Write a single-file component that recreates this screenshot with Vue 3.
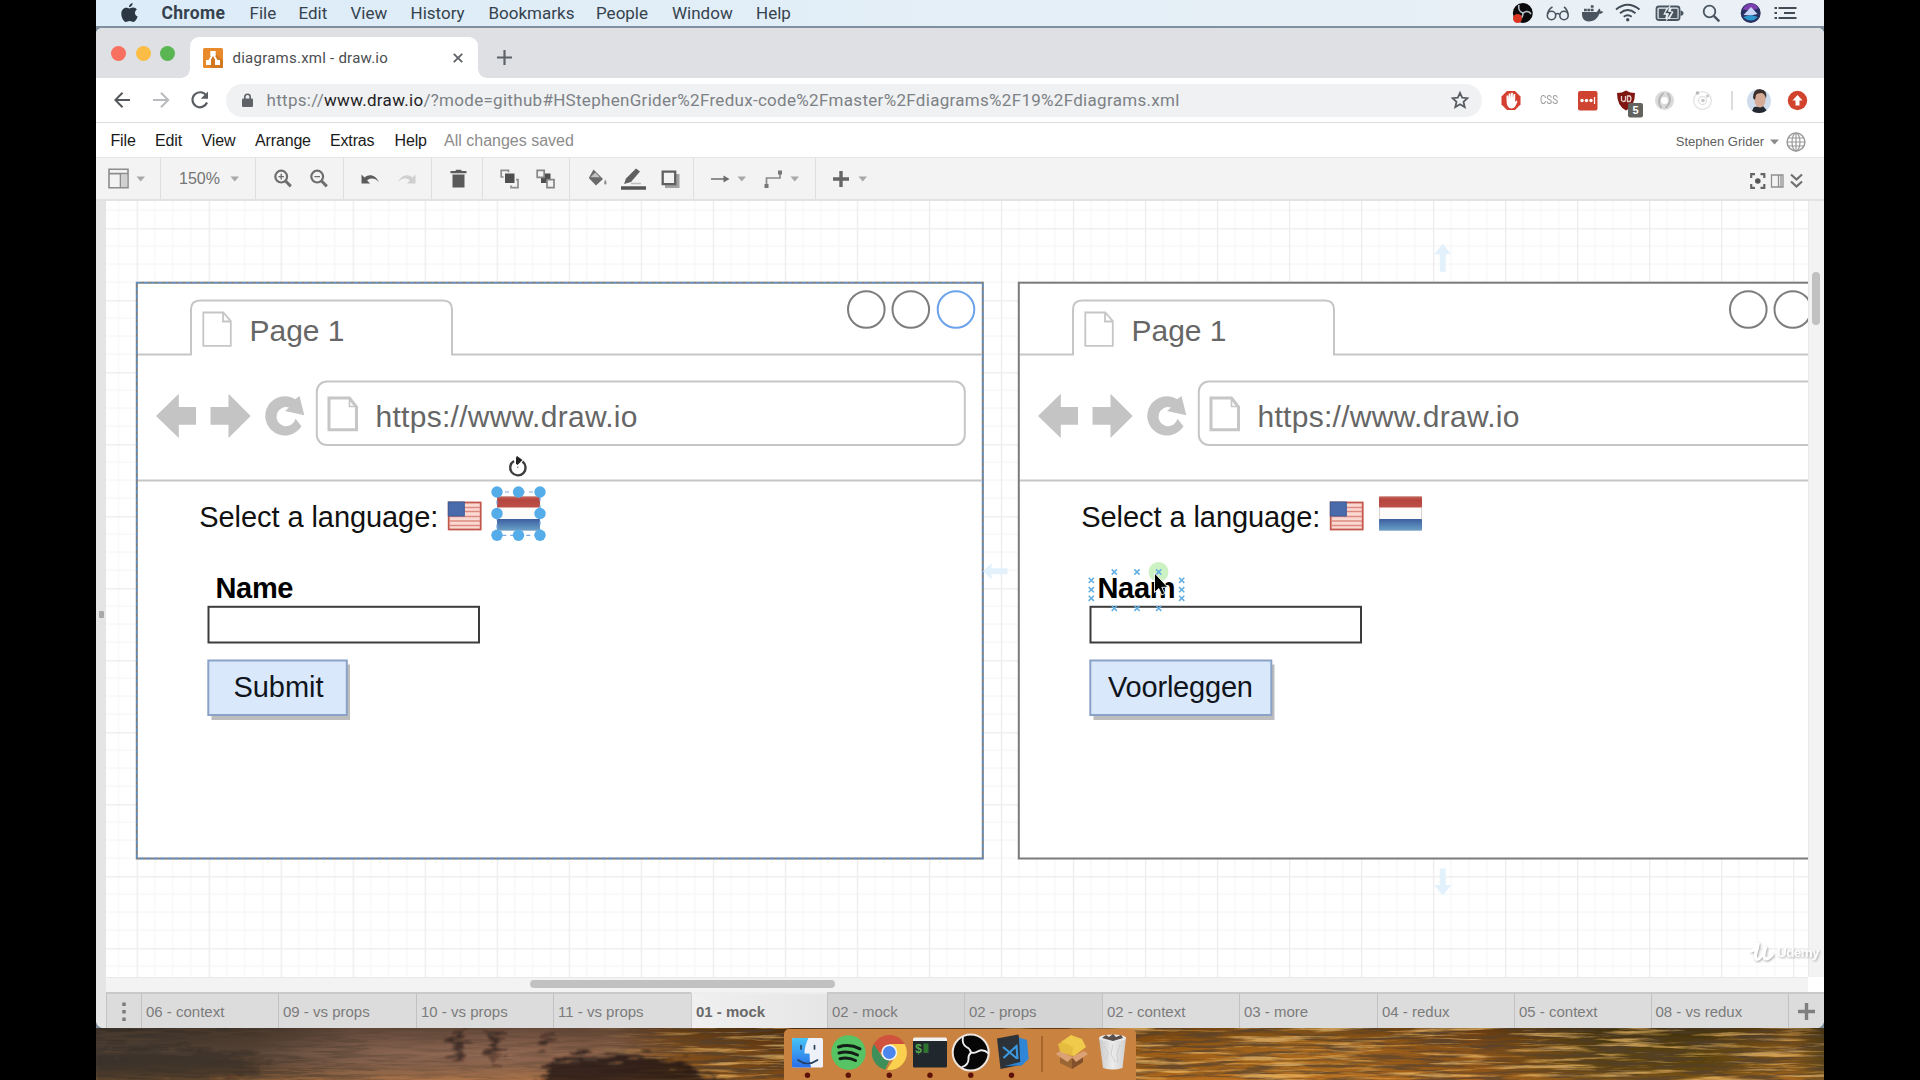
<script setup>
const macMenu = [
  { label: 'File', w: 49 }, { label: 'Edit', w: 52 }, { label: 'View', w: 60 },
  { label: 'History', w: 78 }, { label: 'Bookmarks', w: 107.5 }, { label: 'People', w: 76 },
  { label: 'Window', w: 84 }, { label: 'Help', w: 50 },
]
const appMenu = [
  { label: 'File', w: 44.5 }, { label: 'Edit', w: 46.5 }, { label: 'View', w: 53.5 },
  { label: 'Arrange', w: 75 }, { label: 'Extras', w: 64.5 }, { label: 'Help', w: 49.5 },
]
const caret = '<path d="M0.5 9.5h8.5l-4.25 5z" fill="#a8a8a8"/>'
const toolGroups = [
  { w: 65, items: [
    { w: 21, gap: 12, art: '<g fill="none" stroke="#8c8c8c" stroke-width="1.6"><path d="M1 2.2h19v18.6H1zM1 6.6h19M12.5 6.6v14"/></g><path d="M13.4 7.4h5.8V20h-5.8z" fill="#d0d0d0"/>' },
    { w: 9, gap: 7, art: caret }] },
  { w: 95, items: [{ text: '150%', w: 40, gap: 18 }, { w: 9, gap: 11, art: caret }] },
  { w: 88, items: [
    { w: 18, gap: 18, art: '<circle cx="7.2" cy="9.6" r="5.9" fill="none" stroke="#6e6e6e" stroke-width="2.2"/><path d="M11.6 14l5.2 5.4" stroke="#6e6e6e" stroke-width="3"/><path d="M4.4 9.6h5.6M7.2 6.8v5.6" stroke="#6e6e6e" stroke-width="1.4"/>' },
    { w: 18, gap: 17.5, art: '<circle cx="7.2" cy="9.6" r="5.9" fill="none" stroke="#6e6e6e" stroke-width="2.2"/><path d="M11.6 14l5.2 5.4" stroke="#6e6e6e" stroke-width="3"/><path d="M4.4 9.6h5.6" stroke="#6e6e6e" stroke-width="1.4"/>' }] },
  { w: 88, items: [
    { w: 19, gap: 17, art: '<path d="M0.5 7.5v9h8.6l-3-3c3.400-3 8-2.500 11.800 1.500C15 8.500 8.500 6 3.500 10.500z" fill="#5c5c5c"/>' },
    { w: 19, gap: 17, art: '<path d="M18.500 7.500v9H9.900l3-3C9.500 10.500 4.900 11 1.100 15 4 8.500 10.500 6 15.500 10.500z" fill="#cfcfcf"/>' }] },
  { w: 51, items: [
    { w: 17, gap: 17.5, art: '<path d="M0.500 4h4.800l1-1.300h4.600l1 1.300h4.600v2.300H.500zM2.500 7.500h12v13h-12z" fill="#5a5a5a"/>' }] },
  { w: 87, items: [
    { w: 19, gap: 17, art: '<path d="M5 6.500h9.500V16H5z" fill="#4f4f4f"/><path d="M3.600 10H1.200V3.300h7.300v2M11 18.400v2.200h7v-8h-2" fill="none" stroke="#8e8e8e" stroke-width="1.700"/>' },
    { w: 19, gap: 17, art: '<path d="M5 6.500h9.500V16H5z" fill="#4f4f4f"/><path d="M1.200 3.300h7v7h-7zM11 12.600h7v8h-7z" fill="#f3f3f3" stroke="#858585" stroke-width="1.700"/>' }] },
  { w: 124, items: [
    { w: 20, gap: 17.5, art: '<path d="M5.500 2.500l9.500 9.500-7 6.500L.800 11z" fill="#6a6a6a"/><path d="M2.500 10.200l4.800-4.600 4.600 4.600z" fill="#c4c4c4"/><path d="M17.300 12.500c1.500 2.500 1.800 5 .100 5s-1.600-2.500-.100-5z" fill="#8f8f8f"/>' },
    { w: 25, gap: 13, art: '<path d="M0 19.300h25v3.400H0z" fill="#555"/><path d="M3 17l2-5.500L15 1.500l4 3L10 15z" fill="#5f5f5f"/><path d="M10 16.500h10" stroke="#bdbdbd" stroke-width="1.500"/>' },
    { w: 19, gap: 15.5, art: '<path d="M4 7h14.500v14H4z" fill="#a2a2a2"/><path d="M1.700 4.700h12.500v12.500H1.700z" fill="#f3f3f3" stroke="#606060" stroke-width="2.300"/>' }] },
  { w: 122, items: [
    { w: 19, gap: 17, art: '<path d="M0 12h14" stroke="#6c6c6c" stroke-width="1.700"/><path d="M12.500 8.500L18.500 12l-6 3.500z" fill="#6c6c6c"/>' },
    { w: 9, gap: 7, art: caret },
    { w: 19, gap: 17.5, art: '<path d="M2.500 18v-7h13.500V6" fill="none" stroke="#8a8a8a" stroke-width="1.700"/><path d="M.500 17h4v4h-4zM14 3.500h4v4h-4z" fill="#777"/>' },
    { w: 9, gap: 7, art: caret }] },
  { w: 80, items: [
    { w: 16, gap: 16.500, art: '<path d="M0 12h16M8 4v16" stroke="#666" stroke-width="3.400"/>' },
    { w: 9, gap: 9.5, art: caret }] },
]
const pages = [
  { name: '06 - context', w: 137 }, { name: '09 - vs props', w: 138 }, { name: '10 - vs props', w: 137 },
  { name: '11 - vs props', w: 138 }, { name: '01 - mock', w: 136, active: true }, { name: '02 - mock', w: 137, near: true },
  { name: '02 - props', w: 138, near: true }, { name: '02 - context', w: 137 }, { name: '03 - more', w: 138 },
  { name: '04 - redux', w: 137 }, { name: '05 - context', w: 136.5 }, { name: '08 - vs redux', w: 137.5 },
]
const mocks = [
  { x: 0, selected: true, label: 'Name', labelW: 78, button: 'Submit', buttonW: 138.5, textX: 233.5, textW: 90 },
  { x: 882, selected: false, label: 'Naam', labelW: 78, button: 'Voorleggen', buttonW: 181, textX: 226, textW: 145 },
]
const handles = [[497, 492], [518.5, 492], [540, 492], [497, 513.5], [540, 513.5], [497, 535.3], [518.5, 535.3], [540, 535.3]]
const anchors = [[1114.3, 572], [1137, 572], [1158.7, 572], [1114.3, 608.3], [1137, 608.3], [1158.7, 608.3],
  [1091.3, 580.3], [1091.3, 589.7], [1091.3, 598.3], [1181.7, 580.3], [1181.7, 589.7], [1181.7, 598.3]]
</script>

<template>
  <div class="screen">
    <div class="desktop">
      <header class="macbar">
        <svg class="apple" width="17" height="20" viewBox="0 0 17 20"><path d="M11.600 0c.2 2-1.600 4.200-3.600 4.200C7.800 2.200 9.700.200 11.600 0zM8.400 5.400c.9 0 2-1 3.900-.9 1.500.1 2.800.8 3.600 2-2.900 1.800-2.400 5.800.8 7-1 2.700-2.600 5.500-4.400 5.500-1.400 0-1.900-.9-3.700-.9s-2.300.9-3.600.9C2.600 19 .3 14.400.3 10.800c0-3.700 2.300-6.100 4.700-6.100 1.600 0 2.600.7 3.400.7z" fill="#2b3743" /></svg>
        <b class="app-name">Chrome</b>
        <nav class="mac-items"><span v-for="m in macMenu" :key="m.label" :style="{ width: m.w + 'px' }">{{ m.label }}</span></nav>
        <div class="mac-status">
          <svg width="300" height="26" viewBox="1500 0 300 26">
            <circle cx="1522.800" cy="13" r="10" fill="#0a0a0c" />
            <path d="M1519 5c-1 4 1 7 4 8 3-2 6-2 8 1M1523 13c0 3-2 6-5 7" stroke="#b9c0c8" stroke-width="1.600" fill="none" />
            <circle cx="1517.500" cy="18.500" r="4.500" fill="#d9341f" />
            <g fill="none" stroke="#4a5560" stroke-width="1.600"><circle cx="1551.500" cy="15.500" r="4.200" /><circle cx="1564" cy="15.500" r="4.200" /><path d="M1555.700 14.500q2-2 4 0M1547.500 14q1-5 5-7M1568 14q-1-5-4-7" /></g>
            <path d="M1582 12h14.500c1.500-.5 1.500-3 3-3.500 1 1 1 2 .8 2.800 1 0 2.200 0 3 .5-1 1.700-2.500 2-4 2-2 5.500-6 7.700-10.500 7.700-5 0-7.200-3.500-6.800-9.500zM1584 8.700h2.800v2.600h-2.800zM1587.400 8.700h2.800v2.600h-2.800zM1590.800 8.700h2.800v2.600h-2.800zM1590.800 5.200h2.800v2.600h-2.800z" fill="#4a5560" />
            <g fill="none" stroke="#414c57" stroke-width="1.900"><path d="M1616 9.500q11.700-9.500 23.500 0M1620 13.200q7.700-6.200 15.500 0M1623.700 16.800q4-3.200 8 0" /></g><circle cx="1627.700" cy="19.700" r="1.700" fill="#414c57" />
            <rect x="1656.500" y="6.500" width="23" height="13.500" rx="2.500" fill="none" stroke="#4a5560" stroke-width="1.800" /><path d="M1680.500 10.500q3 .5 3 2.700t-3 2.700z" fill="#4a5560" />
            <path d="M1658.700 8.700h7.500l-3 6h3l-1 3.600h-6.500zM1677.500 8.700v9.600h-7.500l3.500-6.300h-3l1-3.300z" fill="#4a5560" /><path d="M1670 5.500l-5.500 8h4l-2 7 6-9h-4z" fill="#3d4853" stroke="#e8f0f6" stroke-width=".8" />
            <circle cx="1709.500" cy="11.500" r="5.800" fill="none" stroke="#4a5560" stroke-width="1.800" /><path d="M1713.800 15.800l5.500 5.500" stroke="#4a5560" stroke-width="2.400" />
            <circle cx="1750.700" cy="13" r="10" fill="#27305f" /><path d="M1742.500 9.500q3-6 8.500-6 5 0 7.500 5l-7.500 2z" fill="#7b3fb0" /><path d="M1743.500 15l7.500-8 6.500 7-6.500 1.500z" fill="#c8d4f8" /><path d="M1743 17q8 7 15 0l-7-2z" fill="#2f97d0" />
            <path d="M1778.500 8h18M1784 13h11M1778.500 18h18" stroke="#414c57" stroke-width="2.200" /><path d="M1774.500 8h2.500M1774.500 13h2.500M1774.500 18h2.500" stroke="#414c57" stroke-width="2.200" />
          </svg>
        </div>
      </header>

      <main class="window">
        <div class="tabstrip">
          <div class="lights"><i class="red"></i><i class="amber"></i><i class="green"></i></div>
          <div class="tab">
            <svg width="20" height="20" viewBox="0 0 20 20"><rect width="20" height="20" rx="1.500" fill="#e8892c" /><path d="M11 4l9 9v7H9l-5-4z" fill="#c9701c" opacity=".7" /><path d="M10 6L5.500 14M10 6l4.500 8" stroke="#fff" stroke-width="1.800" /><path d="M7.300 3h5.400v5H7.300zM3 12h5v5H3zM12 12h5v5h-5z" fill="#fff" /></svg>
            <span class="tab-title">diagrams.xml - draw.io</span>
            <svg class="close" width="10" height="10" viewBox="0 0 10 10"><path d="M.8.8l8.400 8.400M9.200.8L.8 9.200" stroke="#5f6368" stroke-width="1.900" /></svg>
          </div>
          <svg class="new-tab" width="15" height="15" viewBox="0 0 15 15"><path d="M0 7.500h15M7.500 0v15" stroke="#5f6368" stroke-width="2.200" /></svg>
        </div>

        <div class="address">
          <svg width="96" height="20" viewBox="0 0 96 20" fill="none" stroke-width="2">
            <path d="M16 10H1.500M8.500 2.800L1.300 10l7.200 7.200" stroke="#54585c" />
            <path d="M39 10h15M47 2.800l7.200 7.200-7.200 7.200" stroke="#b9bbbe" />
            <path d="M92.200 5.500a7.500 7.500 0 1 0 .8 7" stroke="#5a5e62" stroke-width="2.200" /><path d="M94 1.500v7.300h-7.300z" fill="#5a5e62" />
          </svg>
          <div class="omnibox">
            <svg width="11" height="14" viewBox="0 0 11 14"><path d="M2.800 6V4a2.700 2.700 0 0 1 5.400 0v2" fill="none" stroke="#5f6368" stroke-width="1.600" /><rect y="5.500" width="11" height="8.500" rx="1.200" fill="#5f6368" /></svg>
            <span class="url">https://<b>www.draw.io</b>/?mode=github#HStephenGrider%2Fredux-code%2Fmaster%2Fdiagrams%2F19%2Fdiagrams.xml</span>
            <svg class="star" width="18" height="18" viewBox="0 0 18 18"><path d="M9 1.800l2.200 4.900 5.300.5-4 3.600 1.200 5.300L9 13.300l-4.700 2.800 1.200-5.300-4-3.600 5.300-.5z" fill="none" stroke="#5a5e62" stroke-width="1.800" /></svg>
          </div>
          <div class="extensions">
            <svg width="310" height="38" viewBox="1498 80 310 38">
              <path d="M1507 90h8l5.500 5.500v8l-5.500 5.500h-8l-5.500-5.500v-8z" fill="#d3402f" /><path d="M1506.500 99v-4.500h1.700V98l.6-5.500h1.700v5l.7-5.800h1.700v5.800l.7-4.500h1.600v8l1-1.500 1.300.8q-2 7.200-6 7.200-5 0-5-8.500z" fill="#fff" />
              <rect x="1578" y="90" width="19.500" height="19.500" rx="2" fill="#ce4430" /><circle cx="1582" cy="99.500" r="1.700" fill="#fff" /><circle cx="1586.500" cy="99.500" r="1.700" fill="#fff" /><circle cx="1591" cy="99.500" r="1.700" fill="#fff" /><path d="M1594.500 96v7" stroke="#fff" stroke-width="1.200" />
              <path d="M1617 92q5 0 9-2.500 4 2.500 9 2.500 0 13-9 17.500-9-4.500-9-17.500z" fill="#7f1710" /><path d="M1621.500 95v4.500q2.300 2 4 0V95M1627.500 95v5.500h2.500q2-2.700 0-5.500z" fill="none" stroke="#e9cfcc" stroke-width="1.300" />
              <rect x="1628" y="102" width="15" height="14.500" rx="2" fill="#62635f" />
              <circle cx="1664.500" cy="99.500" r="6.500" fill="none" stroke="#dadada" stroke-width="6" /><path d="M1661.500 107q-6-8 2-15M1667.500 92q6 8-2 15" stroke="#b4b4b4" stroke-width="1.800" fill="none" />
              <g fill="none" stroke="#e2e2e2" stroke-width="1.300"><circle cx="1702.500" cy="99.500" r="8.800" /><circle cx="1702.500" cy="99.500" r="4" /></g><circle cx="1697.500" cy="92" r="1.800" fill="#b9b9b9" /><circle cx="1703" cy="99.500" r="1.800" fill="#c6c6c6" /><circle cx="1707.500" cy="95" r="1.500" fill="#c6c6c6" />
              <path d="M1732 90v19" stroke="#cfd0d2" stroke-width="1.500" />
              <clipPath id="face"><circle cx="1759" cy="100" r="12" /></clipPath>
              <g clip-path="url(#face)"><path d="M1747 88h24v24h-24z" fill="#cfdced" /><path d="M1751 112l3-6 9-1 6 7z" fill="#222730" /><ellipse cx="1760" cy="98.500" rx="5.500" ry="8" fill="#d6ab97" /><path d="M1753 97q0-9 7-9 8 1 6 10-1-5-4-6-5 0-6 2l-1 5z" fill="#3b2f2b" /></g>
              <circle cx="1797.500" cy="99.500" r="9.700" fill="#d2432e" /><path d="M1797.500 94l5 5.500h-3v5h-4v-5h-3z" fill="#fff" />
            </svg>
            <span class="css-ext">CSS</span><span class="badge">5</span>
          </div>
        </div>

        <div class="appmenu">
          <nav><span v-for="m in appMenu" :key="m.label" :style="{ width: m.w + 'px' }">{{ m.label }}</span></nav>
          <span class="saved">All changes saved</span>
          <div class="user">
            <span>Stephen Grider</span>
            <svg width="9" height="6" viewBox="0 0 9 6"><path d="M0 .5h9L4.500 5.500z" fill="#8a8a8a" /></svg>
            <svg width="20" height="20" viewBox="0 0 20 20" fill="none" stroke="#999" stroke-width="1.200"><circle cx="10" cy="10" r="8.900" stroke-width="1.500" /><ellipse cx="10" cy="10" rx="4" ry="8.900" /><path d="M10 1v18M1 10h18M2.500 6h15M2.500 14h15" /></svg>
          </div>
        </div>

        <div class="toolbar">
          <div v-for="(g, i) in toolGroups" :key="i" class="group" :style="{ width: g.w + 'px' }">
            <template v-for="(t, j) in g.items" :key="j">
              <span v-if="t.text" class="zoom" :style="{ width: t.w + 'px', marginLeft: t.gap + 'px' }">{{ t.text }}</span>
              <svg v-else :width="t.w" height="24" :viewBox="`0 0 ${t.w} 24`" :style="{ marginLeft: t.gap + 'px' }" v-html="t.art"></svg>
            </template>
          </div>
          <div class="view-tools">
            <svg width="54" height="16" viewBox="0 0 54 16" fill="none" stroke="#666">
              <path d="M1.200 5V1.200H5M10.500 1.200h3.800V5M14.300 11v3.800h-3.800M5 14.800H1.200V11" stroke-width="2.200" /><circle cx="7.800" cy="8" r="2.800" fill="#555" stroke="none" />
              <path d="M21.500 2h11.500v12H21.500zM28.500 2v12M31 2v12" stroke="#8f8f8f" stroke-width="1.300" />
              <path d="M41 1.500l5.500 5 5.500-5M41 8.500l5.500 5 5.500-5" stroke="#707070" stroke-width="2.200" />
            </svg>
          </div>
        </div>

        <div class="editor">
          <div class="splitter"><i></i></div>
          <div class="work">
            <div class="canvas-row">
              <svg class="canvas" width="1702" height="776" viewBox="106 201 1702 776" font-family="'Liberation Sans', Arial, sans-serif">
                <defs>
                  <pattern id="grid" width="72.020" height="72" x="136.600" y="228.200" patternUnits="userSpaceOnUse">
                    <path d="M18 0v72M36 0v72M54 0v72M0 18h72M0 36h72M0 54h72" stroke="#f7f7f7" stroke-width="1.300" />
                    <path d="M.6 0v72M0 .6h72.100" stroke="#ececec" stroke-width="1.400" />
                  </pattern>
                  <linearGradient id="nlred" x2="0" y2="1"><stop stop-color="#c5655a" /><stop offset=".3" stop-color="#b5453f" /><stop offset="1" stop-color="#bd4f48" /></linearGradient>
                  <linearGradient id="nlblue" x2="0" y2="1"><stop stop-color="#3c5f9f" /><stop offset="1" stop-color="#6aa0c8" /></linearGradient>
                </defs>
                <rect x="106" y="200" width="1702" height="777" fill="#fff" />
                <rect x="106" y="200" width="1702" height="777" fill="url(#grid)" />

                <g v-for="m in mocks" :key="m.x" :transform="`translate(${m.x} 0)`">
                  <rect x="136.800" y="282.700" width="846" height="575.800" fill="#fff" stroke="#7b7b7b" stroke-width="2" />
                  <g fill="none" stroke="#c6c6c6" stroke-width="2">
                    <path d="M138 354.500h53V309.500q0-9 9-9h243q9 0 9 9v45h530M138 480.500h844" />
                    <rect x="316.800" y="381.500" width="648" height="63.500" rx="10" />
                    <path d="M203.300 312.500h20l7.500 8.700v24.600h-27.500zM223 312.500v9h7.500" stroke-width="1.800" />
                    <path d="M329 398h20.500l7 9v22.800H329z" stroke-width="3" /><path d="M349.500 398v8.500h7" stroke-width="1.600" />
                  </g>
                  <g fill="#c4c4c4">
                    <path d="M156 416l22.800-22.300V407H196v17.700h-17.200V438z" /><path d="M250.700 416l-22.200-22.300V407h-18v17.700h18V438z" />
                    <path d="M301.500 426.200a19.600 19.600 0 1 1-6.300-27l4.300-3.200 4.800 19.300-19.300-4.300 4-3.500a9.600 9.600 0 1 0 6.500 11.300z" />
                  </g>
                  <g font-size="30" fill="#666">
                    <text x="249.500" y="340.500" textLength="95" lengthAdjust="spacingAndGlyphs">Page 1</text>
                    <text x="375.500" y="427" textLength="262">https://www.draw.io</text>
                  </g>
                  <g fill="#fff" stroke="#7d7d7d" stroke-width="2">
                    <circle cx="866.300" cy="309.500" r="18.300" /><circle cx="910.800" cy="309.500" r="18.300" /><circle cx="956" cy="309.500" r="18.300" :stroke="m.selected ? '#6ba2ea' : '#7d7d7d'" />
                  </g>
                  <g font-size="29" fill="#111">
                    <text x="199.300" y="527" textLength="239">Select a language:</text>
                    <text x="215.500" y="598" font-weight="bold" :textLength="m.labelW" fill="#000">{{ m.label }}</text>
                  </g>
                  <rect x="208.500" y="606.800" width="270.500" height="35.700" fill="#fff" stroke="#3c3c3c" stroke-width="2" />
                  <rect x="211.500" y="664.500" :width="m.buttonW" height="55.500" fill="#bdbdbd" />
                  <rect x="208.300" y="660.500" :width="m.buttonW" height="54.500" fill="#dae8fb" stroke="#8ba2c7" stroke-width="2" />
                  <text :x="m.textX" y="697.300" font-size="29" fill="#10151c" :textLength="m.textW">{{ m.button }}</text>

                  <rect x="448.700" y="502.500" width="32" height="27" fill="#fbd9d3" stroke="#c2574b" stroke-width="1.800" />
                  <path d="M450 507.500h30M450 511.500h30M450 516.500h30M450 521h30M450 525.500h30" stroke="#dd8b80" stroke-width="1.400" />
                  <rect x="448.300" y="502" width="16" height="14" fill="#4a6bab" stroke="#3a5a98" />
                  <rect x="497.500" y="496.500" width="42" height="34" fill="#fdfafa" stroke="#ddd2d2" />
                  <rect x="497" y="496.500" width="43" height="11" rx="1" fill="url(#nlred)" /><rect x="497" y="519" width="43" height="11.500" rx="1" fill="url(#nlblue)" />
                </g>

                <rect x="136.800" y="282.700" width="846" height="575.800" fill="none" stroke="#5c93d0" stroke-width="1.300" stroke-dasharray="4 3" />
                <rect x="497" y="492" width="43" height="43.300" fill="none" stroke="#7aa9e0" stroke-width="1.200" stroke-dasharray="4 4" />
                <circle v-for="(h, i) in handles" :key="'h' + i" :cx="h[0]" :cy="h[1]" r="5.700" fill="#54ade9" />
                <path d="M514 461a7.700 7.700 0 1 0 8.500 .5" fill="none" stroke="#3d3d3d" stroke-width="2.400" /><path d="M517 456l5.500 4-5 5-1.500-1.500v-6z" fill="#222" /><circle cx="517.800" cy="467.300" r=".8" fill="#777" />

                <g fill="#e2f1fb">
                  <path d="M983 571.300l8.500-8v5h16v6h-16v5z" /><path d="M1442.700 243.500l8.500 10.700h-5.500v17.500h-6v-17.500h-5.500z" /><path d="M1442.700 895.700l-8.500-10.700h5.500v-16.500h6V885h5.500z" />
                </g>
                <circle cx="1158.500" cy="572" r="10" fill="#7fdc6a" opacity=".4" />
                <path v-for="(a, i) in anchors" :key="'a' + i" :d="`M${a[0] - 2.600} ${a[1] - 2.600}l5.200 5.200m0-5.200l-5.200 5.200`" stroke="#62aee2" stroke-width="1.500" />
                <path d="M1154.500 573v19.500l4.300-4 3 6.500 3-1.500-3-6.200h6z" fill="#000" stroke="#fff" stroke-width=".9" />
              </svg>
              <div class="vtrack"><i></i></div>
            </div>
            <div class="htrack"><i></i></div>
            <div class="pages">
              <div class="page-menu"><svg width="4" height="20" viewBox="0 0 4 20"><path d="M.3.500h3.400v3.400H.3zM.3 8h3.400v3.400H.3zM.3 15.500h3.400v3.400H.3z" fill="#7b7b7b" /></svg></div>
              <div v-for="p in pages" :key="p.name" class="page" :class="{ active: p.active, near: p.near }" :style="{ width: p.w + 'px' }">{{ p.name }}</div>
              <div class="page-add"><svg width="17" height="17" viewBox="0 0 17 17"><path d="M0 8.500h17M8.500 0v17" stroke="#7f7f7f" stroke-width="3.400" /></svg></div>
            </div>
          </div>
          <div class="watermark">
            <svg width="24" height="22" viewBox="0 0 26 24"><path d="M1 11q5-1 8-9-1 7-3 12-1 6 2 6 4 0 9-14-3 11-1 13 3 2 8-4" fill="none" stroke="#fff" stroke-width="3.600" stroke-linecap="round" /></svg>
            <span>Udemy</span>
          </div>
        </div>
      </main>

      <footer class="wallpaper">
        <svg class="water" width="1728" height="52" viewBox="0 0 1728 52">
          <defs>
            <linearGradient id="w">
              <stop stop-color="#4a3f36" /><stop offset=".09" stop-color="#5a4638" /><stop offset=".15" stop-color="#866350" /><stop offset=".24" stop-color="#946a54" /><stop offset=".3" stop-color="#8a6149" /><stop offset=".34" stop-color="#84501c" /><stop offset=".4" stop-color="#6a3e12" /><stop offset=".6" stop-color="#9c5c16" /><stop offset=".7" stop-color="#ae6c1e" /><stop offset=".8" stop-color="#8f5418" /><stop offset=".87" stop-color="#5b4312" /><stop offset=".93" stop-color="#5b430f" /><stop offset=".98" stop-color="#8d5b1b" /><stop offset="1" stop-color="#5e4616" />
            </linearGradient>
            <linearGradient id="wv" x2="0" y2="1"><stop stop-color="#000" stop-opacity=".3" /><stop offset=".5" stop-color="#000" stop-opacity="0" /><stop offset="1" stop-color="#ff9a30" stop-opacity=".25" /></linearGradient>
            <linearGradient id="fade"><stop offset=".28" stop-color="#000" /><stop offset=".36" stop-color="#fff" /></linearGradient>
            <mask id="sunlit"><rect width="1728" height="52" fill="url(#fade)" /></mask>
            <linearGradient id="fadeShade"><stop offset=".12" stop-color="#fff" /><stop offset=".18" stop-color="#666" /><stop offset=".3" stop-color="#777" /><stop offset=".35" stop-color="#fff" /></linearGradient>
            <mask id="shaded"><rect width="1728" height="52" fill="url(#fadeShade)" /></mask>
            <filter id="ripple" x="0" y="0" width="1" height="1"><feTurbulence type="fractalNoise" baseFrequency=".022 .3" numOctaves="5" seed="7" /><feColorMatrix values="0 0 0 0 .08  0 0 0 0 .05  0 0 0 0 .03  4.500 0 0 0 -1.900" /></filter>
            <filter id="glint" x="0" y="0" width="1" height="1"><feTurbulence type="fractalNoise" baseFrequency=".014 .24" numOctaves="5" seed="21" /><feColorMatrix values="0 0 0 0 .95  0 0 0 0 .56  0 0 0 0 .16  0 4 0 0 -2" /></filter>
            <filter id="ragged" x="-.2" y="-.2" width="1.400" height="1.400"><feTurbulence type="fractalNoise" baseFrequency=".03 .3" numOctaves="3" seed="4" /><feDisplacementMap in="SourceGraphic" scale="34" xChannelSelector="R" yChannelSelector="G" /><feGaussianBlur stdDeviation="1.200" /></filter>
          </defs>
          <rect width="1728" height="52" fill="url(#w)" /><rect width="1728" height="52" fill="url(#wv)" />
          <g mask="url(#shaded)"><rect width="1728" height="52" filter="url(#ripple)" opacity=".65" /></g>
          <g mask="url(#sunlit)"><rect width="1728" height="52" filter="url(#glint)" opacity=".65" /></g>
          <g filter="url(#ragged)" fill="#1d1410">
            <path d="M455 30l90-2 75 18v14H440z" opacity=".75" />
            <path d="M0 22h120l50 12-60 26H0z" opacity=".35" />
            <path d="M356 2h11v30h-11zM394 6h8v26h-8zM445 2h9v14h-9z" opacity=".6" />
          </g>
        </svg>
        <div class="dock">
          <svg width="352" height="51" viewBox="784 1029 352 51">
            <defs>
              <linearGradient id="fb" x2="0" y2="1"><stop stop-color="#46c4f5" /><stop offset="1" stop-color="#2b6ee8" /></linearGradient>
              <clipPath id="ch"><circle cx="889.300" cy="1052.500" r="17.600" /></clipPath>
              <linearGradient id="tr"><stop stop-color="#c9c9c9" /><stop offset=".5" stop-color="#ececec" /><stop offset="1" stop-color="#cfcfcf" /></linearGradient>
            </defs>
            <rect x="792" y="1038" width="31" height="29.500" rx="1.500" fill="#eef2f8" /><path d="M808.500 1038q-4 8-4 15.500h5q0 8 1.500 14h-17.500q-1.500 0-1.500-1.500v-26.500q0-1.500 1.500-1.500z" fill="url(#fb)" />
            <path d="M798 1060q9.500 7 19.500 0M801 1045.500v3.500M814.500 1045.500v3.500" fill="none" stroke="#27405f" stroke-width="1.700" stroke-linecap="round" />
            <circle cx="848.500" cy="1052.500" r="17.200" fill="#56c364" /><path d="M838.500 1047q11-3.500 21.500 1.800M839 1053q9.500-2.700 18.500 2M840 1058.700q8-2 15.500 1.800" fill="none" stroke="#132018" stroke-width="3" stroke-linecap="round" />
            <g clip-path="url(#ch)"><path d="M871 1034h37v18h-37z" fill="#d1533d" /><path d="M889 1044h19v27h-22l9-14z" fill="#fad04e" /><path d="M872 1041.500l10 15 7.500 3.500-5 11h-14z" fill="#3f8f5a" /></g>
            <circle cx="889.300" cy="1052.500" r="8" fill="#f2f2f2" /><circle cx="889.300" cy="1052.500" r="6.400" fill="#4a86ee" />
            <rect x="913" y="1038" width="34" height="29.500" rx="1.500" fill="#20282e" /><path d="M913 1041v-2q0-1.500 1.500-1.500h31q1.500 0 1.500 1.500v2z" fill="#f2f2f2" /><rect x="923.500" y="1043.500" width="5" height="9.500" fill="#2f7232" />
            <text x="915" y="1052.500" font-family="'Liberation Mono', monospace" font-size="12" font-weight="bold" fill="#54a94d">$</text>
            <circle cx="970.700" cy="1052.500" r="18" fill="#060606" stroke="#eee6df" stroke-width="2" />
            <g fill="none" stroke="#eee" stroke-width="1.900"><path v-for="r in [0, 120, 240]" :key="r" d="M971 1052.500q-1-4-4.500-5.500-5-3-3.500-10" :transform="`rotate(${r} 971 1052.500)`" /></g>
            <path d="M997 1038.500l21.500-4 4.500 30-22.500 4.500z" fill="#2d3238" /><path d="M1019 1037.500l8 2.500 1.700 19-7 6.500-17 .5 15.500-4z" fill="#2f86d6" /><path d="M1003 1047l14 11.500M1003.500 1058l13-12 1 13" fill="none" stroke="#3a97e0" stroke-width="2.200" />
            <path d="M1042 1036v36" stroke="#9a5c25" stroke-width="1.500" />
            <path d="M1060 1053l12 6 11-6v9l-11 7-12-6z" fill="#9c6534" /><path d="M1072 1059l11-6v9l-11 7z" fill="#82502a" /><path d="M1055.500 1054l5-3 12 6-5 5zM1088 1054l-4-3-12 6 4 5z" fill="#dba276" /><path d="M1061 1042l10-7 11 4 4 8-12 9-13-4z" fill="#f0cb4b" /><path d="M1058 1044l4-2 11 5-1 9-12-5z" fill="#e5bb40" />
            <path d="M1099 1038h27l-3.500 30q-9.500 3-19.500 0z" fill="url(#tr)" /><ellipse cx="1112.500" cy="1038" rx="13.500" ry="3.500" fill="#e9e9e9" /><path d="M1102 1038l4-3 3 2 4-3 3 3 5-2 2 3-10 3z" fill="#5a4d4a" /><path d="M1104 1046l4 6-2 8M1113 1044l-2 10 4 8M1120 1045l-3 9 1 9" fill="none" stroke="#cfcfcf" />
            <circle v-for="x in [807.5, 848.3, 889.3, 930, 970.8, 1011.5]" :key="x" :cx="x" cy="1075.300" r="2.700" fill="#5d1208" />
          </svg>
        </div>
      </footer>
    </div>
  </div>
</template>

<style>
html, body { margin: 0; background: #000; overflow: hidden; }
</style>

<style scoped>
.screen { width: 1920px; height: 1080px; background: #000; display: flex; justify-content: center; font-family: Roboto, 'Liberation Sans', sans-serif; }
.desktop { width: 1728px; height: 1080px; display: flex; flex-direction: column; background: #7f8f9d; }
svg { display: block; flex: none; }
.macbar { height: 26px; display: flex; align-items: center; background: linear-gradient(90deg, #dcecf8, #ebf1f6); font-size: 17px; color: #35424e; white-space: nowrap; }
.apple { margin-left: 25px; }
.app-name { width: 88px; margin-left: 23.500px; font-size: 17.500px; letter-spacing: .3px; }
.mac-items { display: flex; }
.mac-status { margin-left: auto; margin-right: 24px; }
.window { margin-top: 2px; height: 1000px; display: flex; flex-direction: column; border-radius: 6px 6px 8px 8px; overflow: hidden; background: #fff; }
.tabstrip { height: 50px; background: #dee0e4; display: flex; align-items: center; }
.lights { display: flex; gap: 9.500px; margin-left: 15px; padding-top: 1.500px; }
.lights i { width: 15px; height: 15px; border-radius: 50%; }
.red { background: #f8705f; }
.amber { background: #fbbd45; }
.green { background: #5ab653; }
.tab { width: 288px; height: 41px; margin-left: 15px; align-self: flex-end; background: #fff; border-radius: 9px 9px 0 0; display: flex; align-items: center; position: relative; }
.tab::before, .tab::after { content: ''; position: absolute; bottom: 0; width: 9px; height: 9px; }
.tab::before { left: -9px; background: radial-gradient(circle at 0 0, transparent 8.500px, #fff 9px); }
.tab::after { right: -9px; background: radial-gradient(circle at 100% 0, transparent 8.500px, #fff 9px); }
.tab > svg:first-child { margin-left: 13px; }
.tab-title { margin-left: 9.500px; padding-top: 1px; font-size: 15px; letter-spacing: .24px; color: #4a4d51; flex: 1; }
.close { margin-right: 15px; }
.new-tab { margin-left: 18.500px; margin-top: 9px; }
.address { height: 44px; display: flex; align-items: center; border-bottom: 1px solid #dcdcdc; }
.address > svg { margin-left: 18px; }
.omnibox { width: 1256px; height: 33px; margin-left: 16px; border-radius: 17px; background: #eff1f3; display: flex; align-items: center; }
.omnibox > svg:first-child { margin-left: 16px; }
.url { margin-left: 13.500px; flex: 1; font-size: 17px; letter-spacing: .3px; color: #7d8185; white-space: nowrap; }
.url b { font-weight: 400; color: #1f2124; }
.star { margin-right: 13px; }
.extensions { margin-left: 16px; position: relative; }
.css-ext { position: absolute; left: 42px; top: 11px; font: 13px/16px Roboto, sans-serif; color: #9a9a9a; transform: scaleX(.75); transform-origin: 0 0; }
.badge { position: absolute; left: 130px; top: 22px; width: 15px; font: bold 11px/15px 'Liberation Sans', sans-serif; text-align: center; color: #fff; }
.appmenu { height: 35px; display: flex; align-items: center; font: 16px 'Liberation Sans', Arial, sans-serif; color: #1a1a1a; border-bottom: 1px solid #e6e6e6; box-sizing: border-box; padding-top: 1px; letter-spacing: -.15px; }
.appmenu nav { display: flex; margin-left: 14.500px; }
.saved { color: #8c8c8c; letter-spacing: 0; }
.user { margin-left: auto; margin-right: 18px; display: flex; align-items: center; font-size: 13px; letter-spacing: 0; color: #606060; padding-top: 2px; }
.user svg:nth-of-type(1) { margin: 0 7px 0 6px; }
.toolbar { height: 43px; box-sizing: border-box; background: #f3f3f3; border-bottom: 2px solid #e2e2e2; display: flex; }
.group { display: flex; align-items: center; box-sizing: border-box; border-right: 1px solid #dfdfdf; padding-top: 1px; }
.group:nth-last-child(2) { border-right: 0; }
.zoom { font: 16px 'Liberation Sans', Arial, sans-serif; color: #757575; }
.view-tools { margin-left: auto; margin-right: 20px; align-self: center; padding-top: 4px; }
.editor { height: 827px; display: flex; position: relative; }
.splitter { width: 10px; background: #e5e5e5; display: flex; align-items: center; }
.splitter i { width: 5px; height: 7px; margin-left: 3px; background: #a9a9a9; border-radius: 1px; }
.work { width: 1718px; display: flex; flex-direction: column; }
.canvas-row { display: flex; height: 776px; }
.vtrack { width: 16px; background: #f3f3f3; box-sizing: border-box; border-left: 1px solid #e9e9e9; }
.vtrack i { display: block; width: 8px; height: 53px; margin: 71px 0 0 3px; border-radius: 4px; background: #c1c1c1; }
.htrack { height: 15px; width: 1702px; background: #f3f3f3; box-sizing: border-box; border-top: 1px solid #e9e9e9; }
.htrack i { display: block; width: 305px; height: 8px; margin: 2px 0 0 424px; border-radius: 4px; background: #c1c1c1; }
.pages { height: 36px; display: flex; background: #dcdcdc; font: 15px 'Liberation Sans', Arial, sans-serif; color: #7b7b7b; }
.pages > div { box-sizing: border-box; border-top: 2px solid #c9c9c9; border-left: 1px solid #c2c2c2; display: flex; align-items: center; padding-top: 1px; }
.pages .page-menu { width: 35px; padding-left: 15px; }
.pages .page { padding-left: 4px; }
.pages .active { background: linear-gradient(90deg, #f0f0f0, #e6e6e6); font-weight: bold; border-top-color: #eee; border-left-color: #ccc; color: #6a6a6a; }
.pages .near { background: #d4d4d4; }
.pages .page-add { flex: 1; padding-left: 9px; }
.watermark { position: absolute; left: 1654px; top: 740px; display: flex; align-items: center; gap: 3px; filter: drop-shadow(1px 1px 1px #aaa); font: bold 13.500px 'Liberation Sans', sans-serif; color: #fff; letter-spacing: -.6px; }
.wallpaper { height: 52px; position: relative; display: flex; }
.dock { position: absolute; left: 688px; top: 1px; background: #c98240; border-radius: 5px 5px 0 0; }
</style>
